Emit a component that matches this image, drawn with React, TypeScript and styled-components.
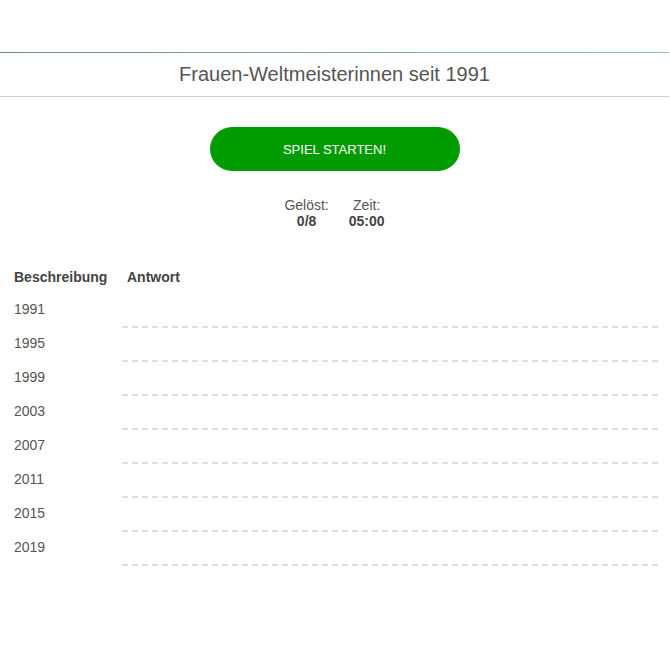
import React from "react";
import styled, { createGlobalStyle } from "styled-components";

const Global = createGlobalStyle`
  html, body { margin: 0; padding: 0; background: #fff; }
  body { font-family: "Liberation Sans", Arial, sans-serif; color: #555; }
`;

const Page = styled.div`
  width: 669px;
  padding-top: 52px;
`;

const TitleBar = styled.header`
  position: relative;
  border-top: 1px solid #6a8799;
  border-bottom: 1px solid #cfcfcf;
  height: 43px;
  display: flex;
  align-items: center;
  justify-content: center;
  &::before {
    content: "";
    position: absolute;
    left: 0;
    right: 0;
    top: -1px;
    height: 1px;
    background: linear-gradient(to right, #6a8799, #9bbcd0);
  }
`;

const Title = styled.h1`
  margin: 0;
  font-size: 20px;
  font-weight: normal;
  color: #555;
`;

const Center = styled.div`
  display: flex;
  flex-direction: column;
  align-items: center;
  padding-top: 30px;
`;

const StartButton = styled.button`
  width: 250px;
  height: 44px;
  border: none;
  border-radius: 22px;
  background: #009b00;
  color: #fff;
  font-family: "Liberation Sans", Arial, sans-serif;
  font-size: 13px;
  cursor: pointer;
`;

const Stats = styled.div`
  display: flex;
  gap: 20px;
  margin-top: 26px;
  font-size: 14px;
`;

const Stat = styled.div`
  display: flex;
  flex-direction: column;
  align-items: center;
  line-height: 16px;
`;

const StatValue = styled.span`
  font-weight: bold;
  color: #444;
`;

const Table = styled.div`
  display: grid;
  grid-template-columns: 112px 536px;
  margin: 31px 0 0 10px;
  font-size: 14px;
`;

const HeadCell = styled.div<{ $pad: number }>`
  height: 34px;
  display: flex;
  align-items: center;
  padding-left: ${(p) => p.$pad}px;
  font-weight: bold;
  color: #444;
`;

const DescCell = styled.div`
  height: 30px;
  display: flex;
  align-items: center;
  padding: 0 0 4px 4px;
  color: #555;
`;

const AnswerCell = styled.div`
  height: 32px;
  border-bottom: 2px dashed #dcdcdc;
`;

const years = ["1991", "1995", "1999", "2003", "2007", "2011", "2015", "2019"];

export default function App() {
  return (
    <>
      <Global />
      <Page>
        <TitleBar>
          <Title>Frauen-Weltmeisterinnen seit 1991</Title>
        </TitleBar>
        <Center>
          <StartButton>SPIEL STARTEN!</StartButton>
          <Stats>
            <Stat>
              <span>Gelöst:</span>
              <StatValue>0/8</StatValue>
            </Stat>
            <Stat>
              <span>Zeit:</span>
              <StatValue>05:00</StatValue>
            </Stat>
          </Stats>
        </Center>
        <Table>
          <HeadCell $pad={4}>Beschreibung</HeadCell>
          <HeadCell $pad={5}>Antwort</HeadCell>
          {years.map((y) => (
            <React.Fragment key={y}>
              <DescCell>{y}</DescCell>
              <AnswerCell />
            </React.Fragment>
          ))}
        </Table>
      </Page>
    </>
  );
}
